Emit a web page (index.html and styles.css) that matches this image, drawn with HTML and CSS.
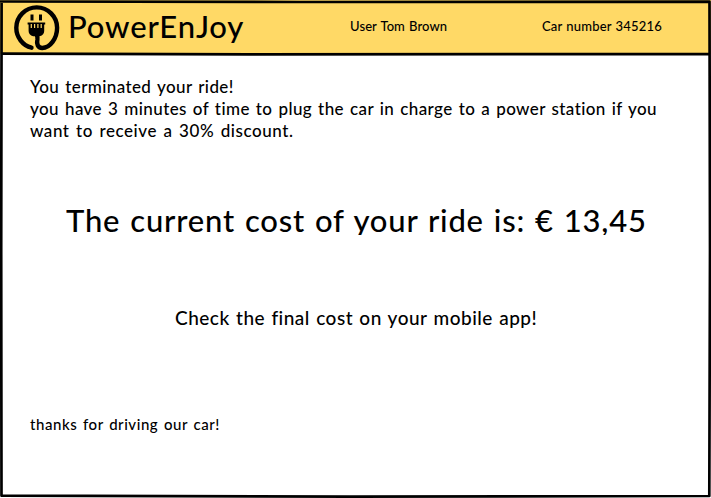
FILE: index.html
```
<!DOCTYPE html>
<html lang="en">
<head>
<meta charset="utf-8">
<title>PowerEnJoy</title>
<link rel="stylesheet" href="styles.css">
</head>
<body>
<div class="screen">
  <header class="bar">
    <svg class="logo" viewBox="0 0 46 46" aria-hidden="true">
      <path class="cord" d="M17.5 42.7 C8.5 40.5 2.3 32 2.3 22.8 A20.4 20.4 0 1 1 43.1 22.8 C43.1 33.5 36 43 28.2 43 C23.6 43 22.5 38.5 23.4 34.5 Q23.8 32.5 22.8 30"/>
      <path d="M16.5 9.5h3v6h-3zM25 9.5h3v6h-3z"/>
      <path d="M13.6 17.5h17.6v2h-1v6.5q0 4-4.5 5.3h-6.6q-4.5-1.3-4.5-5.3v-6.5h-1z"/>
      <path class="slots" d="M17.3 19v4M20.6 19v4M23.9 19v4M27.2 19v4"/>
    </svg>
    <h1 class="brand">PowerEnJoy</h1>
    <span class="user">User Tom Brown</span>
    <span class="car">Car number 345216</span>
  </header>
  <main class="content">
    <p class="notice"><span class="line one">You terminated your ride!</span><span class="line two">you have 3 minutes of time to plug the car in charge to a power station if you</span><span class="line three">want to receive a 30% discount.</span></p>
    <p class="cost">The current cost of your ride is: € 13,45</p>
    <p class="check">Check the final cost on your mobile app!</p>
    <p class="thanks">thanks for driving our car!</p>
  </main>
  <svg class="frame" viewBox="0 0 711 498" aria-hidden="true">
    <path d="M0 1.5 L300 2 L709.5 1.6 L710 250 L709.3 496 L350 496.6 L1.5 495.7 L1.2 250 L1.6 1"/>
    <path d="M1 53.7 L250 54.3 L710 54.1"/>
  </svg>
</div>
</body>
</html>
```

FILE: styles.css
```
* { box-sizing: border-box; }
body, h1, p { margin: 0; }
body { overflow: hidden; color: #000; font-family: Lato, "Liberation Sans", sans-serif; font-weight: 500; }
.screen { position: relative; width: 711px; height: 498px; background: #fff; display: flex; flex-direction: column; white-space: nowrap; }
.bar { height: 54px; background: #ffd966; display: flex; padding-left: 14px; }
.logo { width: 46px; height: 46px; margin-top: 5px; }
.cord { fill: none; stroke: #000; stroke-width: 4.4; stroke-linecap: round; }
.slots { fill: none; stroke: #ffd966; stroke-width: 1.2; }
.brand { width: 290px; padding-left: 8px; font-size: 31px; line-height: 53px; font-weight: 500; letter-spacing: .85px; }
.user { width: 192px; font-size: 13px; line-height: 53px; letter-spacing: .1px; word-spacing: .7px; }
.car { font-size: 13px; line-height: 53px; letter-spacing: .2px; word-spacing: .6px; }
.content { flex: 1; display: flex; flex-direction: column; padding: 22px 30px 0; }
.notice { font-size: 17px; line-height: 22px; height: 66px; }
.line { display: block; letter-spacing: .4px; word-spacing: 1.35px; }
.three { letter-spacing: .55px; word-spacing: 1.7px; }
.cost { margin: 60px 0 0 36px; height: 33px; overflow: hidden; font-size: 31px; line-height: 36px; letter-spacing: .8px; word-spacing: 1.35px; }
.check { margin: 71px 0 0 145px; font-size: 19px; line-height: 24px; letter-spacing: .5px; word-spacing: 1px; }
.thanks { margin-top: 84px; font-size: 15px; line-height: 20px; letter-spacing: .55px; word-spacing: 1.4px; }
.frame { position: absolute; inset: 0; width: 711px; height: 498px; fill: none; stroke: #000; stroke-width: 2.7; stroke-linejoin: round; pointer-events: none; }
```
